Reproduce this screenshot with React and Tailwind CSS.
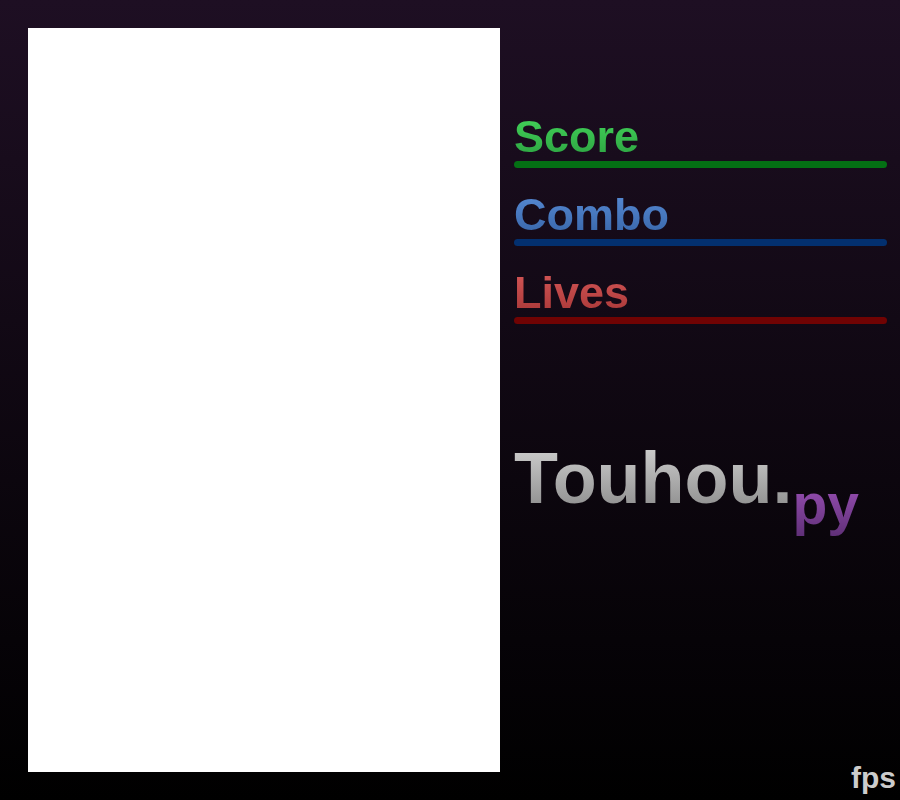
const stats = [
  { label: "Score", text: "from-[#44d65b] to-[#2ba040]", bar: "bg-[#047014]" },
  { label: "Combo", text: "from-[#588cd6] to-[#3663a6]", bar: "bg-[#03306f]" },
  { label: "Lives", text: "from-[#d65858] to-[#a63636]", bar: "bg-[#700303]" },
];

function Stat({ label, text, bar }) {
  return (
    <div>
      <h2 className={`w-fit bg-linear-to-b/srgb bg-clip-text text-[45px] leading-[48px] font-bold text-transparent ${text}`}>
        {label}
      </h2>
      <div className={`h-[7px] rounded-full ${bar}`} />
    </div>
  );
}

export default function App() {
  return (
    <div className="grid min-h-screen grid-cols-[500fr_400fr] bg-linear-to-b/srgb from-[#1e0f23] to-black font-['Liberation_Sans',Arial,sans-serif]">
      <main className="my-7 ml-7 min-w-0 bg-white" aria-label="Playfield" />
      <aside className="flex min-w-0 flex-col pt-[113px] pl-3.5">
        <div className="flex flex-col gap-[23px] pr-[13px]">
          {stats.map((stat) => (
            <Stat key={stat.label} {...stat} />
          ))}
        </div>
        <h1 className="mt-28 flex items-start font-bold">
          <span className="bg-linear-to-b/srgb from-[#d8d8d8] to-[#848484] bg-clip-text text-[72px] leading-[84px] text-transparent">
            Touhou.
          </span>
          <span className="mt-9 bg-linear-to-b/srgb from-[#a456c0] to-[#603078] bg-clip-text text-[57px] leading-[64px] text-transparent">
            py
          </span>
        </h1>
        <p className="mt-auto self-end pr-1 pb-[5px] text-[30px] leading-[34px] font-bold text-[#cccccc]">fps</p>
      </aside>
    </div>
  );
}
